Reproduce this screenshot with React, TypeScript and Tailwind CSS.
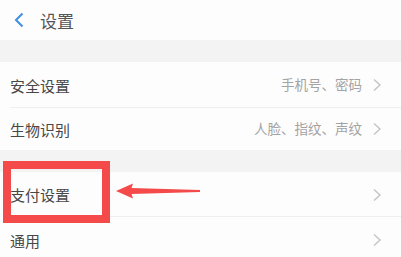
import React from "react";

const Chevron = () => (
  <svg width="10" height="14" viewBox="0 0 10 14" className="shrink-0">
    <path d="M2 1.5 L8 7 L2 12.5" fill="none" stroke="#c4c4c4" strokeWidth="1.4" />
  </svg>
);

const Row = ({ label, value, h, divider }: { label: string; value?: string; h: string; divider?: boolean }) => (
  <div className={`relative flex items-center pl-[10px] pr-[19px] bg-[#fdfdfd] ${h}`}>
    <span className="text-[15px] text-[#474747] leading-none">{label}</span>
    <div className="ml-auto flex items-center gap-[10px]">
      {value && <span className="text-[13.5px] text-[#a3a3a3] leading-none">{value}</span>}
      <Chevron />
    </div>
    {divider && <div className="absolute bottom-0 left-[10px] right-0 h-px bg-[#efefef]" />}
  </div>
);

export default function App() {
  return (
    <div
      className="relative w-[401px] h-[257px] overflow-hidden bg-[#fdfdfd]"
      style={{ fontFamily: '"Noto Sans CJK SC", "Noto Sans", sans-serif' }}
    >
      <div className="h-[40px] flex items-center pl-[13px] bg-[#fdfdfd]">
        <svg width="12" height="16" viewBox="0 0 12 16">
          <path d="M9.5 1.5 L3 8 L9.5 14.5" fill="none" stroke="#3f8fe3" strokeWidth="2" />
        </svg>
        <span className="ml-[15px] text-[17px] text-[#555] leading-none">设置</span>
      </div>
      <div className="h-[22px] bg-[#f3f3f3]" />
      <Row label="安全设置" value="手机号、密码" h="h-[46px]" divider />
      <Row label="生物识别" value="人脸、指纹、声纹" h="h-[42px]" />
      <div className="h-[22px] bg-[#f3f3f3]" />
      <Row label="支付设置" h="h-[45px]" divider />
      <Row label="通用" h="h-[46px]" />

      <div className="absolute left-[3px] top-[161px] w-[107px] h-[62px] border-[8px] border-[#f44a4a]" />
      <svg className="absolute left-[114px] top-[180px]" width="90" height="22" viewBox="0 0 90 22">
        <path d="M2 11 L19 3.5 L17.5 8 L86 10 L86 12 L17.5 14 L19 18.5 Z" fill="#f44a4a" />
      </svg>
    </div>
  );
}
